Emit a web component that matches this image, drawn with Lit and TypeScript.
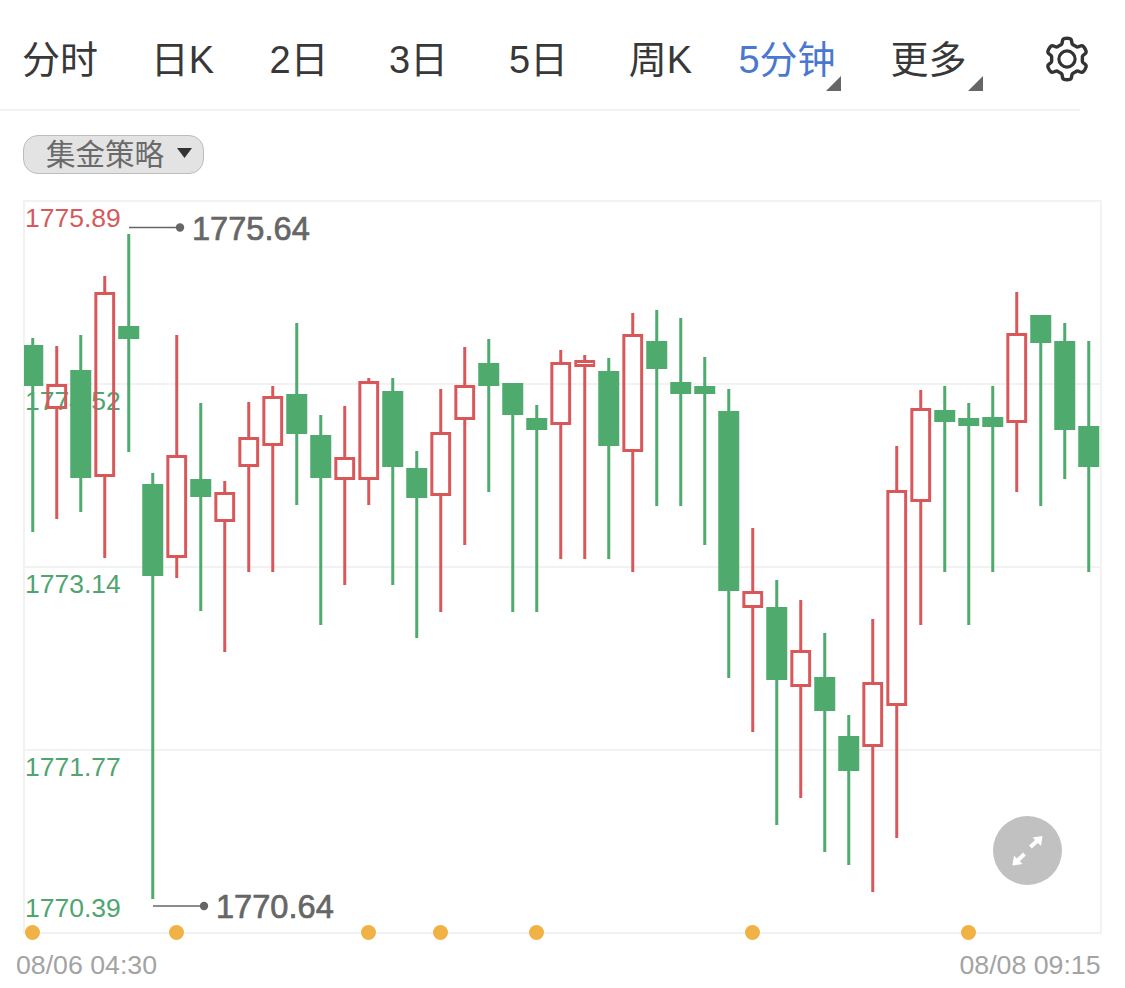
import { LitElement, html, css, svg } from "lit";
import { customElement } from "lit/decorators.js";

type C = [number, number, number, number, "g" | "r"];
// wick top, body top, body bottom, wick bottom, colour — one per 5-minute slot
const candles: C[] = [
  [338, 345, 386, 532, "g"], [346, 384, 409, 519, "r"], [335, 370, 478, 512, "g"], [276, 292, 477, 558, "r"],
  [234, 326, 339, 452, "g"], [473, 484, 576, 899, "g"], [335, 455, 558, 578, "r"], [403, 479, 497, 611, "g"],
  [481, 492, 522, 652, "r"], [402, 437, 467, 572, "r"], [386, 396, 446, 572, "r"], [323, 394, 434, 505, "g"],
  [415, 435, 478, 625, "g"], [406, 457, 480, 585, "r"], [378, 381, 480, 505, "r"], [378, 391, 467, 585, "g"],
  [451, 468, 498, 638, "g"], [389, 432, 496, 612, "r"], [347, 385, 420, 545, "r"], [339, 363, 386, 492, "g"],
  [383, 383, 415, 612, "g"], [405, 418, 430, 612, "g"], [350, 362, 425, 559, "r"], [355, 360, 367, 559, "r"],
  [358, 371, 446, 559, "g"], [313, 334, 452, 572, "r"], [310, 341, 369, 506, "g"], [318, 382, 394, 506, "g"],
  [357, 386, 394, 545, "g"], [389, 411, 591, 678, "g"], [528, 591, 608, 732, "r"], [580, 607, 680, 825, "g"],
  [600, 650, 687, 798, "r"], [633, 677, 711, 852, "g"], [715, 736, 771, 865, "g"], [619, 682, 747, 892, "r"],
  [446, 490, 706, 838, "r"], [390, 408, 502, 625, "r"], [386, 410, 422, 572, "g"], [403, 418, 426, 625, "g"],
  [386, 417, 427, 572, "g"], [292, 333, 423, 492, "r"], [315, 315, 343, 506, "g"], [323, 341, 430, 479, "g"],
  [341, 426, 467, 572, "g"],
];

const dots = [32.5, 176.5, 368.5, 440.5, 536.5, 752.5, 968.5];
const axis = [
  { t: "1775.89", y: 227, c: "down" },
  { t: "1774.52", y: 410, c: "up" },
  { t: "1773.14", y: 593, c: "up" },
  { t: "1771.77", y: 776, c: "up" },
  { t: "1770.39", y: 917, c: "up" },
];

const GREEN = "#4faa6e";
const RED = "#d8585a";

function gearPath(cx: number, cy: number): string {
  const pts: string[] = [];
  const n = 240;
  for (let i = 0; i < n; i++) {
    const a = (i / n) * Math.PI * 2;
    // six teeth, the top one centred on the vertical axis
    const k = Math.cos(6 * (a - Math.PI / 2));
    const s = 0.5 + (0.5 * Math.tanh(2.6 * k)) / Math.tanh(2.6);
    const r = 15.4 + 5.3 * s;
    pts.push(`${(cx + r * Math.cos(a)).toFixed(2)},${(cy + r * Math.sin(a)).toFixed(2)}`);
  }
  return `M${pts.join("L")}Z`;
}

@customElement("app-root")
export class AppRoot extends LitElement {
  static styles = css`
    :host {
      display: block;
      width: 1125px;
      height: 988px;
      background: #fff;
      overflow: hidden;
      font-family: "Liberation Sans", "Noto Sans CJK SC", sans-serif;
    }
    .bar {
      width: 1080px;
      height: 111px;
      box-sizing: border-box;
      padding-top: 11px;
      border-bottom: 2px solid #f2f2f2;
      display: grid;
      grid-template-columns: 120px 125px 108px 131px 109px 135px 118px 165px 69px;
      align-items: center;
    }
    .tab {
      position: relative;
      text-align: center;
      font-size: 38px;
      line-height: 50px;
      color: #383838;
      white-space: nowrap;
    }
    .tab.active {
      color: #4a78cf;
    }
    .tri {
      position: absolute;
      top: 41px;
      width: 15px;
      height: 15px;
      background: #666;
      clip-path: polygon(100% 0, 100% 100%, 0 100%);
    }
    .tri.a { left: 98px; }
    .tri.b { left: 122px; }
    .gear {
      display: block;
      margin: -2px 0 0 34px;
      width: 44px;
      height: 44px;
      overflow: visible;
    }
    .filter {
      display: flex;
      padding: 24px 0 0 23px;
      height: 79px;
      box-sizing: border-box;
    }
    .pill {
      width: 181px;
      height: 39px;
      box-sizing: border-box;
      display: flex;
      align-items: center;
      gap: 13px;
      padding: 1px 0 0 22px;
      background: #e3e3e3;
      border: 1px solid #bcbcbc;
      border-radius: 15px;
      color: #6a6a6a;
      font-size: 29.5px;
      line-height: 36px;
      white-space: nowrap;
    }
    .caret {
      flex: none;
      width: 15px;
      height: 10px;
      background: #333;
      clip-path: polygon(0 0, 100% 0, 50% 100%);
      margin-top: -4px;
    }
    .chart {
      display: block;
      width: 1125px;
      height: 798px;
    }
    .chart text {
      font-family: "Liberation Sans", sans-serif;
    }
    .axis { font-size: 26.5px; }
    .axis.up { fill: #4ea56e; }
    .axis.down { fill: #d55a5c; }
    .time { font-size: 26.7px; fill: #a3a3a3; }
    .extreme { font-size: 32.6px; fill: #666; stroke: #666; stroke-width: 0.7px; }
  `;

  private candle(c: C, i: number) {
    const x = 32.75 + 24 * i;
    const [wt, bt, bb, wb, k] = c;
    const col = k === "g" ? GREEN : RED;
    const wick = svg`
      ${wt < bt ? svg`<rect x=${x - 1.5} y=${wt} width="3" height=${bt - wt} fill=${col}></rect>` : ""}
      <rect x=${x - 1.5} y=${bb} width="3" height=${wb - bb} fill=${col}></rect>`;
    const body =
      k === "g"
        ? svg`<rect x=${x - 10.5} y=${bt} width="21" height=${bb - bt} fill=${col}></rect>`
        : svg`<rect x=${x - 8.9} y=${bt + 1.5} width="17.8" height=${bb - bt - 3} fill="none" stroke=${col} stroke-width="3"></rect>`;
    return svg`${wick}${body}`;
  }

  render() {
    return html`
      <div class="bar">
        <div class="tab">分时</div>
        <div class="tab">日K</div>
        <div class="tab">2日</div>
        <div class="tab">3日</div>
        <div class="tab">5日</div>
        <div class="tab">周K</div>
        <div class="tab active">5分钟<span class="tri a"></span></div>
        <div class="tab">更多<span class="tri b"></span></div>
        <svg class="gear" viewBox="0 0 44 44" aria-label="设置">
          <path d=${gearPath(22, 22)} fill="none" stroke="#333" stroke-width="3.4" stroke-linejoin="round"></path>
          <circle cx="22" cy="22" r="8.1" fill="none" stroke="#333" stroke-width="3.2"></circle>
        </svg>
      </div>
      <div class="filter">
        <div class="pill">集金策略<span class="caret"></span></div>
      </div>
      <svg class="chart" viewBox="0 190 1125 798">
        <defs>
          <clipPath id="plot"><rect x="24" y="200" width="1078" height="734"></rect></clipPath>
        </defs>
        <rect x="24" y="201" width="1077" height="732" fill="none" stroke="#f2f2f2" stroke-width="2"></rect>
        ${[384, 567, 750].map(
          (y) => svg`<line x1="24" x2="1101" y1=${y} y2=${y} stroke="#f2f2f2" stroke-width="2"></line>`
        )}
        ${axis.map((a) => svg`<text class="axis ${a.c}" x="25" y=${a.y}>${a.t}</text>`)}
        <g clip-path="url(#plot)">${candles.map((c, i) => this.candle(c, i))}</g>
        ${dots.map((x) => svg`<circle cx=${x} cy="932.5" r="7.5" fill="#f0b245"></circle>`)}

        <line x1="129" x2="178" y1="227.5" y2="227.5" stroke="#666" stroke-width="1.6"></line>
        <circle cx="180" cy="227.5" r="4.2" fill="#666"></circle>
        <text class="extreme" x="192" y="240">1775.64</text>

        <line x1="153" x2="202" y1="906" y2="906" stroke="#666" stroke-width="1.6"></line>
        <circle cx="204" cy="906" r="4.2" fill="#666"></circle>
        <text class="extreme" x="216" y="918">1770.64</text>

        <text class="time" x="16" y="974">08/06 04:30</text>
        <text class="time" x="1100.5" y="974" text-anchor="end">08/08 09:15</text>

        <circle cx="1027.5" cy="850.5" r="34.5" fill="#c1c1c1"></circle>
        <line x1="1030.5" y1="847" x2="1038" y2="840" stroke="#fff" stroke-width="4"></line>
        <polygon points="1042.5,836 1032.5,837.5 1041,846" fill="#fff"></polygon>
        <line x1="1024.5" y1="854" x2="1017" y2="861" stroke="#fff" stroke-width="4"></line>
        <polygon points="1012.3,865.5 1022.5,864 1014,855.5" fill="#fff"></polygon>
      </svg>
    `;
  }
}
